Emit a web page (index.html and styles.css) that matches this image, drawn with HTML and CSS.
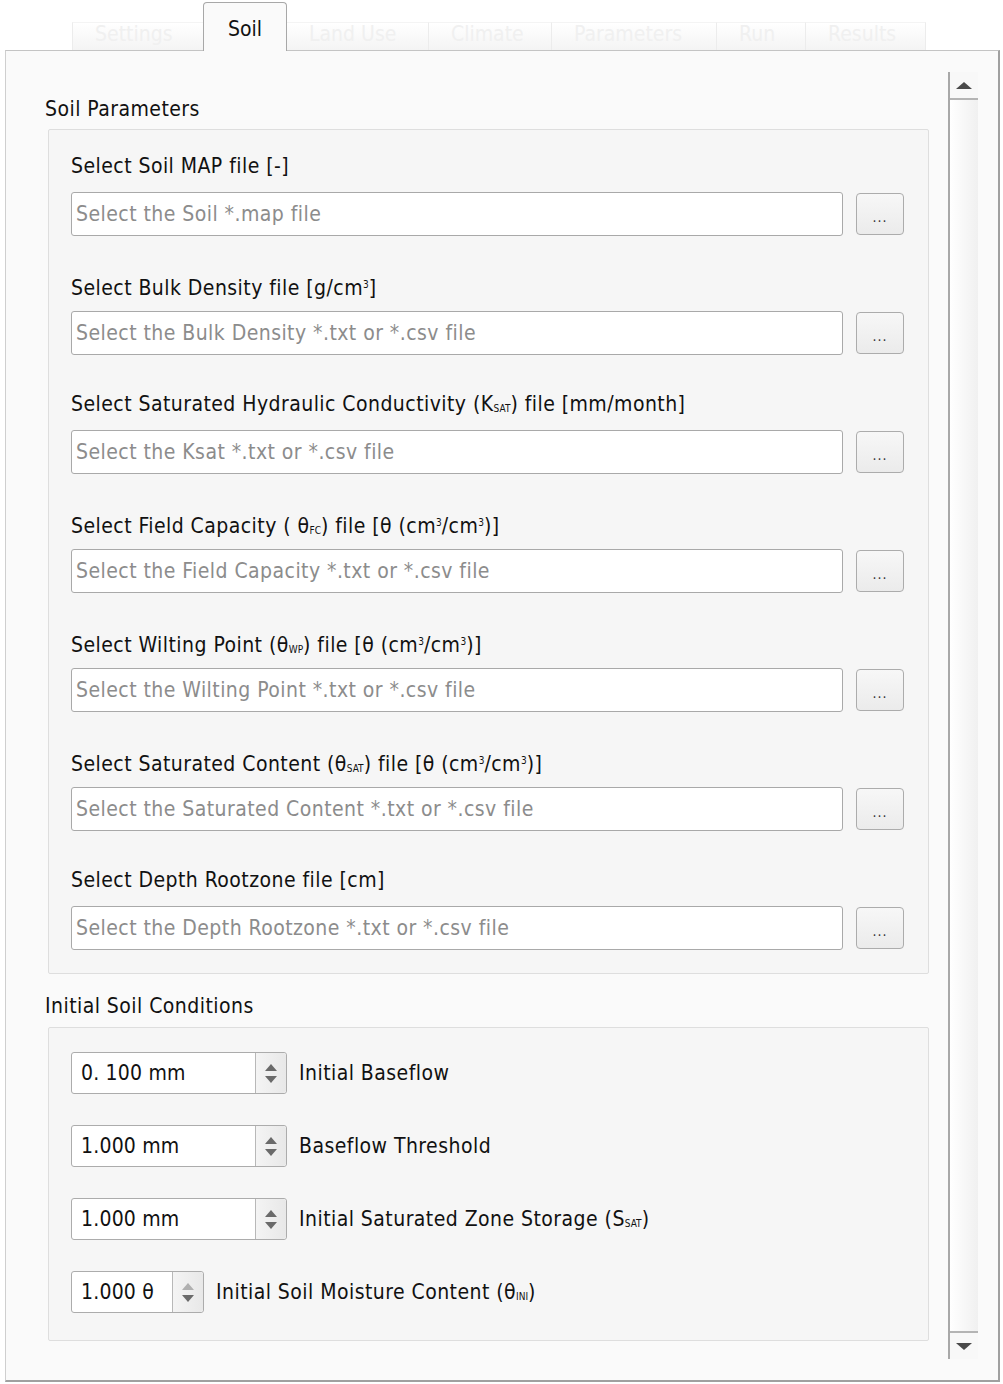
FILE: index.html
```html
<!DOCTYPE html>
<html>
<head>
<meta charset="utf-8">
<link rel="stylesheet" href="styles.css">
</head>
<body>
<div class="tabbar">
  <div class="tab">Settings</div>
  <div class="tab active">Soil</div>
  <div class="tab">Land Use</div>
  <div class="tab">Climate</div>
  <div class="tab">Parameters</div>
  <div class="tab">Run</div>
  <div class="tab">Results</div>
</div>
<div class="pane">
  <div class="content">
    <div class="section-title">Soil Parameters</div>
    <div class="group files">
      <div class="row">
        <div class="label">Select Soil MAP file [-]</div>
        <div class="field"><div class="input">Select the Soil *.map file</div><div class="btn">...</div></div>
      </div>
      <div class="row">
        <div class="label">Select Bulk Density file [g/cm<sup>3</sup>]</div>
        <div class="field"><div class="input">Select the Bulk Density *.txt or *.csv file</div><div class="btn">...</div></div>
      </div>
      <div class="row">
        <div class="label">Select Saturated Hydraulic Conductivity (K<sub>SAT</sub>) file [mm/month]</div>
        <div class="field"><div class="input">Select the Ksat *.txt or *.csv file</div><div class="btn">...</div></div>
      </div>
      <div class="row">
        <div class="label">Select Field Capacity ( θ<sub>FC</sub>) file [θ (cm<sup>3</sup>/cm<sup>3</sup>)]</div>
        <div class="field"><div class="input">Select the Field Capacity *.txt or *.csv file</div><div class="btn">...</div></div>
      </div>
      <div class="row">
        <div class="label">Select Wilting Point (θ<sub>WP</sub>) file [θ (cm<sup>3</sup>/cm<sup>3</sup>)]</div>
        <div class="field"><div class="input">Select the Wilting Point *.txt or *.csv file</div><div class="btn">...</div></div>
      </div>
      <div class="row">
        <div class="label">Select Saturated Content (θ<sub>SAT</sub>) file [θ (cm<sup>3</sup>/cm<sup>3</sup>)]</div>
        <div class="field"><div class="input">Select the Saturated Content *.txt or *.csv file</div><div class="btn">...</div></div>
      </div>
      <div class="row">
        <div class="label">Select Depth Rootzone file [cm]</div>
        <div class="field"><div class="input">Select the Depth Rootzone *.txt or *.csv file</div><div class="btn">...</div></div>
      </div>
    </div>
    <div class="section-title second">Initial Soil Conditions</div>
    <div class="group spins">
      <div class="spinrow">
        <div class="spin"><div class="spin-val">0. 100 mm</div><div class="spin-arrows"><span class="up"></span><span class="down"></span></div></div>
        <div class="spin-label">Initial Baseflow</div>
      </div>
      <div class="spinrow">
        <div class="spin"><div class="spin-val">1.000 mm</div><div class="spin-arrows"><span class="up"></span><span class="down"></span></div></div>
        <div class="spin-label">Baseflow Threshold</div>
      </div>
      <div class="spinrow">
        <div class="spin"><div class="spin-val">1.000 mm</div><div class="spin-arrows"><span class="up"></span><span class="down"></span></div></div>
        <div class="spin-label">Initial Saturated Zone Storage (S<sub>SAT</sub>)</div>
      </div>
      <div class="spinrow">
        <div class="spin small"><div class="spin-val">1.000 θ</div><div class="spin-arrows dim"><span class="up"></span><span class="down"></span></div></div>
        <div class="spin-label">Initial Soil Moisture Content (θ<sub>INI</sub>)</div>
      </div>
    </div>
  </div>
  <div class="scrollbar">
    <div class="sb-btn"><span class="tri-up"></span></div>
    <div class="sb-track"></div>
    <div class="sb-btn bottom"><span class="tri-down"></span></div>
  </div>
</div>
</body>
</html>
```

FILE: styles.css
```css
* { box-sizing: border-box; }
html, body { margin: 0; padding: 0; background: #ffffff; }
body {
  font-family: "DejaVu Sans Condensed", "DejaVu Sans", sans-serif;
  font-size: 21px;
  letter-spacing: 0.45px;
  color: #111;
  width: 1003px;
  height: 1384px;
  overflow: hidden;
}

/* Tabs */
.tabbar {
  display: flex;
  align-items: flex-end;
  height: 50px;
  padding-left: 72px;
  padding-top: 2px;
}
.tab {
  height: 28px;
  line-height: 22px;
  padding: 0 22px;
  color: #f0f0f0;
  background: linear-gradient(#ffffff, #f4f4f4);
  border-left: 1px solid #ececec;
  border-top: 1px solid #f4f4f4;
  white-space: nowrap;
  letter-spacing: 0;
}
.tab:nth-child(1) { width: 131px; }
.tab:nth-child(3) { width: 141px; border-left: none; }
.tab:nth-child(4) { width: 123px; }
.tab:nth-child(5) { width: 165px; }
.tab:nth-child(6) { width: 89px; }
.tab:nth-child(7) { width: 121px; border-right: 1px solid #ececec; }
.tab.active {
  width: 84px;
  height: 49px;
  margin-bottom: -1px;
  position: relative;
  z-index: 2;
  background: #fafafa;
  color: #111;
  border: 1px solid #a8a8a8;
  border-bottom: none;
  border-radius: 4px 4px 0 0;
  text-align: center;
  padding: 0;
  line-height: 52px;
  font-size: 21px;
}

/* Pane */
.pane {
  margin-left: 5px;
  width: 995px;
  height: 1332px;
  background: #fafafa;
  border: 1px solid #c4c4c4;
  border-left-color: #cfcfcf;
  border-right: 2px solid #a0a0a0;
  border-bottom: 2px solid #a0a0a0;
  display: flex;
}
.content {
  flex: 1;
  padding: 45px 19px 0 39px;
}
.section-title {
  height: 26px;
  line-height: 26px;
  color: #111;
}
.section-title.second { margin-top: 19px; }

.group {
  margin-left: 3px;
  margin-top: 7px;
  background: #f6f6f6;
  border: 1px solid #dedede;
  border-radius: 2px;
}
.files { padding: 23px 23px 22px 22px; height: 845px; }
.row + .row { margin-top: 36px; }
.label {
  height: 26px;
  line-height: 26px;
  white-space: nowrap;
}
.label sub, .spin-label sub {
  font-size: 10px;
  vertical-align: -1px;
  letter-spacing: 0;
}
.label sup {
  font-size: 10px;
  vertical-align: 7px;
  letter-spacing: 0;
}
.field {
  display: flex;
  align-items: center;
  margin-top: 13px;
  gap: 13px;
}
.input {
  width: 772px;
  height: 44px;
  background: #ffffff;
  border: 1px solid #a9a9a9;
  border-radius: 3px;
  line-height: 42px;
  padding-left: 4px;
  color: #8c8c8c;
  white-space: nowrap;
}
.btn {
  width: 48px;
  height: 42px;
  border: 1px solid #acacac;
  border-radius: 4px;
  background: linear-gradient(#f7f7f7, #ebebeb);
  text-align: center;
  line-height: 46px;
  font-size: 14px;
  color: #333;
  letter-spacing: 1px;
}

.spins { padding: 24px 20px 23px 22px; height: 314px; margin-top: 8px; }
.spinrow {
  display: flex;
  align-items: center;
  gap: 12px;
}
.spinrow + .spinrow { margin-top: 31px; }
.spin {
  width: 216px;
  height: 42px;
  display: flex;
  background: #ffffff;
  border: 1px solid #acacac;
  border-radius: 3px;
}
.spin.small { width: 133px; }
.spin-val {
  flex: 1;
  line-height: 40px;
  padding-left: 9px;
  color: #111;
  white-space: nowrap;
  letter-spacing: 0.2px;
}
.spin-arrows {
  width: 31px;
  border-left: 1px solid #b8b8b8;
  background: linear-gradient(90deg, #f4f4f4, #e8e8e8);
  border-radius: 0 3px 3px 0;
  display: flex;
  flex-direction: column;
  align-items: center;
  justify-content: center;
  gap: 5px;
}
.spin-arrows .up {
  width: 0; height: 0;
  border-left: 6px solid transparent;
  border-right: 6px solid transparent;
  border-bottom: 7px solid #6a6a6a;
}
.spin-arrows .down {
  width: 0; height: 0;
  border-left: 6px solid transparent;
  border-right: 6px solid transparent;
  border-top: 7px solid #6a6a6a;
}
.spin-arrows.dim .up { border-bottom-color: #b0b0b0; }
.spin-label { white-space: nowrap; }

/* Scrollbar */
.scrollbar {
  width: 30px;
  margin: 21px 20px 21px 0;
  display: flex;
  flex-direction: column;
  border-left: 2px solid #a8a8a8;
  background: linear-gradient(90deg, #ffffff, #f0f0f0);
}
.sb-btn {
  height: 28px;
  display: flex;
  align-items: center;
  justify-content: center;
  border-bottom: 2px solid #b4b4b4;
  background: #f8f8f8;
}
.sb-btn.bottom {
  border-bottom: none;
  border-top: 2px solid #b4b4b4;
}
.sb-track { flex: 1; }
.tri-up {
  width: 0; height: 0;
  border-left: 8px solid transparent;
  border-right: 8px solid transparent;
  border-bottom: 7px solid #4a4a4a;
}
.tri-down {
  width: 0; height: 0;
  border-left: 8px solid transparent;
  border-right: 8px solid transparent;
  border-top: 7px solid #4a4a4a;
}
```
